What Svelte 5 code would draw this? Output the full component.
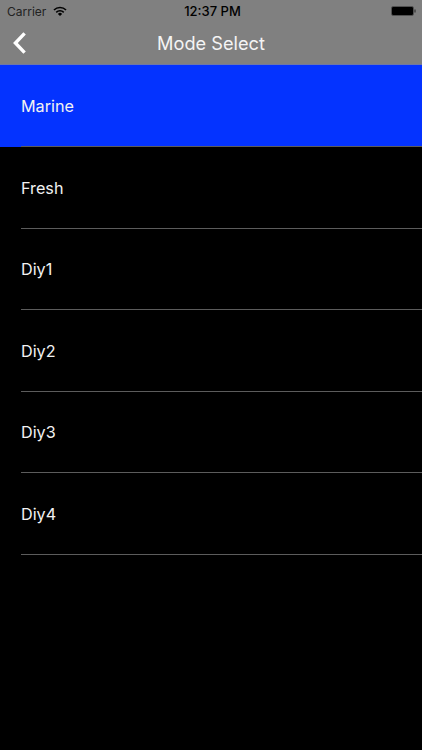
<script lang="ts">
	const modes = ['Marine', 'Fresh', 'Diy1', 'Diy2', 'Diy3', 'Diy4'];
	let selected = 0;
</script>

<div class="screen">
	<header>
		<div class="status">
			<div class="status-left">
				<span>Carrier</span>
				<svg class="wifi" width="14" height="10" viewBox="0 0 14 10">
					<path d="M0.4 3.4 A9.4 9.4 0 0 1 13.6 3.4 L12.5 4.6 A7.8 7.8 0 0 0 1.5 4.6 Z" fill="#000" />
					<path d="M2.7 5.7 A6.2 6.2 0 0 1 11.3 5.7 L10.2 6.9 A4.6 4.6 0 0 0 3.8 6.9 Z" fill="#000" />
					<path d="M4.9 7.9 A3 3 0 0 1 9.1 7.9 L7 10 Z" fill="#000" />
				</svg>
			</div>
			<span class="time">12:37 PM</span>
			<svg class="battery" width="25" height="10" viewBox="0 0 25 10">
				<rect x="0.5" y="0.5" width="22" height="9" rx="1.5" fill="none" stroke="#333" stroke-width="0.6" />
				<rect x="1" y="1" width="21" height="8" rx="1" fill="#000" />
				<rect x="23.4" y="3.5" width="1.2" height="3" fill="#333" />
			</svg>
		</div>
		<div class="nav">
			<svg class="back" width="16" height="24" viewBox="0 0 16 24">
				<path d="M12.6 2.4 L3.4 12 L12.6 21.6" fill="none" stroke="#fff" stroke-width="3.4" />
			</svg>
			<h1>Mode Select</h1>
		</div>
	</header>
	<ul>
		{#each modes as mode, i}
			<li class:selected={i === selected}>
				<button on:click={() => (selected = i)}>{mode}</button>
			</li>
		{/each}
	</ul>
</div>

<style>
	:global(body) {
		margin: 0;
		background: #000;
	}
	.screen {
		width: 422px;
		height: 750px;
		background: #000;
		overflow: hidden;
		font-family: Inter, 'Liberation Sans', sans-serif;
	}
	header {
		height: 65px;
		background: #808080;
		border-bottom: 1px solid #6f78a8;
		box-sizing: border-box;
	}
	.status {
		height: 22px;
		padding: 0 6px 0 7px;
		display: flex;
		align-items: center;
		justify-content: space-between;
		position: relative;
		font-size: 12px;
		color: #222;
	}
	.status-left {
		display: flex;
		align-items: center;
		gap: 7px;
	}
	.time {
		position: absolute;
		left: 0;
		right: 0;
		padding-left: 3px;
		text-align: center;
		color: #000;
		font-size: 13px;
		font-weight: 500;
	}
	.nav {
		height: 42px;
		position: relative;
		display: flex;
		align-items: center;
		justify-content: center;
	}
	.back {
		position: absolute;
		left: 12px;
		top: 9px;
	}
	h1 {
		margin: 0;
		font-size: 18.2px;
		font-weight: 400;
		color: #f4f4f4;
	}
	ul {
		list-style: none;
		margin: 0;
		padding: 0;
	}
	li {
		height: 81.5px;
		position: relative;
	}
	li:first-child {
		height: 82px;
	}
	li::after {
		content: '';
		position: absolute;
		left: 21px;
		right: 0;
		bottom: 0;
		height: 1px;
		background: #5c5c5c;
	}
	li.selected {
		background: #0433ff;
	}
	button {
		display: block;
		width: 100%;
		height: 100%;
		padding: 0 0 0 21px;
		border: 0;
		background: none;
		color: #f2f2f2;
		font: inherit;
		font-size: 16.2px;
		text-align: left;
	}
</style>
